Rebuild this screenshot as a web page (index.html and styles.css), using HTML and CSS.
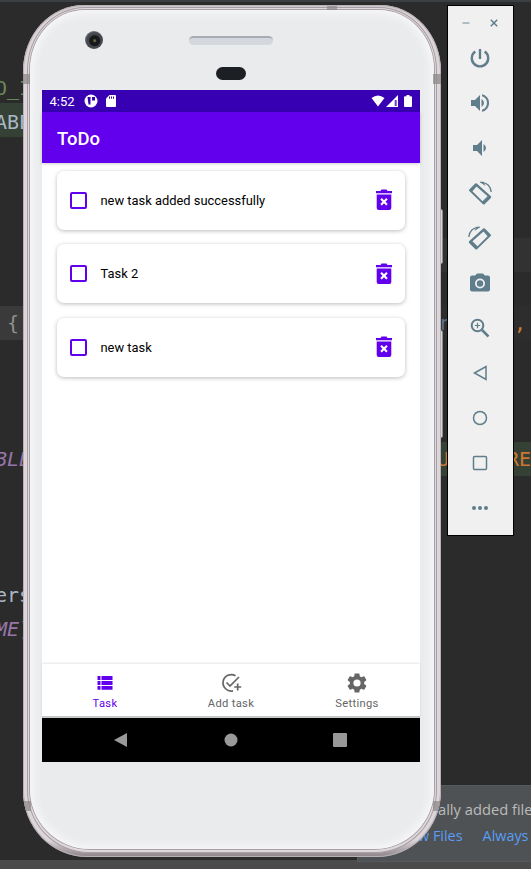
FILE: index.html
```html
<!DOCTYPE html>
<html lang="en">
<head>
<meta charset="utf-8">
<title>ToDo</title>
<link rel="stylesheet" href="styles.css">
</head>
<body>
<svg width="0" height="0" class="defs">
  <symbol id="trash" viewBox="0 0 24 24"><path fill-rule="evenodd" d="M4 5.200V3h4.500l1-1.500h5L15.500 3H20v2.200zM4.700 6.500h14.600V20q0 2-2 2H6.700q-2 0-2-2zM8.300 11.500l2.200 2.300-2.200 2.300 1.500 1.500 2.200-2.300 2.200 2.300 1.500-1.500-2.200-2.300 2.200-2.300-1.500-1.500-2.200 2.300-2.200-2.300z"/></symbol>
  <symbol id="rotate" viewBox="0 0 24 24"><path fill-rule="evenodd" d="M1.300 8.500L7.200 2.600q.8-.7 1.600 0L22.900 15.300q.8.800 0 1.600l-6.300 6.300q-.8.700-1.600 0L1.300 10.100q-.7-.8 0-1.600zM4.400 10.200L14.500 20.300l5.100-5.100L8.500 5.600z"/><path class="o" d="M12.500 1.300q9.500 0 10.700 9.700" stroke-width="1.300"/><path d="M11.500.7h4l2 4.300z"/></symbol>
</svg>
<div class="desktop">
  <div class="editor">
    <div class="line"></div>
    <div class="line"></div>
    <div class="line string"><span class="code-a">O_I</span></div>
    <div class="line match-left"><span class="code-a">ABE</span></div>
    <div class="line short"></div>
    <div class="line"></div>
    <div class="line"></div>
    <div class="line caret"></div>
    <div class="line"></div>
    <div class="line folded"><span class="code-b">{</span><span class="code-n">n</span><span class="comma">,</span></div>
    <div class="line"></div>
    <div class="line"></div>
    <div class="line"></div>
    <div class="line match-right"><span class="code-a field">BLE</span><span class="code-u">U</span><span class="code-re">RE</span></div>
    <div class="line"></div>
    <div class="line"></div>
    <div class="line"></div>
    <div class="line"><span class="code-c">ers</span></div>
    <div class="line"><span class="code-a field">ME</span><span>)</span></div>
  </div>
  <div class="footer-strip"></div>
  <div class="balloon">
    <p>ally added files</p>
    <p class="links"><span>w Files</span><span>Always</span></p>
  </div>

  <div class="side-button power"></div>
  <div class="side-button volume"></div>
  <div class="phone">
    <i class="band top-band"></i><i class="band left-band"></i><i class="band right-band"></i><i class="band low-left"></i><i class="band low-right"></i>
    <div class="rim"><div class="face">
      <div class="sensors">
        <i class="camera"></i><i class="speaker"></i><i class="sensor"></i>
      </div>
      <div class="screen">
        <div class="status">
          <span class="clock">4:52</span>
          <svg class="app-dot" viewBox="0 0 14 14"><circle cx="7" cy="7" r="6.500" fill="#fff"/><path d="M3.500 3h3v7.500h-2M8 3h3v3.500H8z" fill="#3700b3"/></svg>
          <svg class="sd" viewBox="0 0 10 12"><path d="M3.500 0H9q1 0 1 1v10q0 1-1 1H1q-1 0-1-1V3.500z" fill="#fff"/><path d="M3.500 1.500v2.200M5.500 1.500v2.200M7.500 1.500v2.200" stroke="#3700b3"/></svg>
          <svg class="signals" viewBox="0 0 42 12"><path d="M.5 3Q7-2 13.500 3L7 11.500zM27 0v12H15z" fill="#fff"/><path d="M23.700 5h2v6h-2z" fill="#6740c7"/><path d="M33 2.200q0-1 1-1h1.500V0h3v1.200H40q1 0 1 1V11q0 1-1 1h-6q-1 0-1-1z" fill="#fff"/></svg>
        </div>
        <div class="appbar">ToDo</div>
        <div class="tasks">
          <div class="card"><i class="check"></i><span>new task added successfully</span><svg><use href="#trash"/></svg></div>
          <div class="card"><i class="check"></i><span>Task 2</span><svg><use href="#trash"/></svg></div>
          <div class="card"><i class="check"></i><span>new task</span><svg><use href="#trash"/></svg></div>
        </div>
        <div class="tabs">
          <div class="tab active"><svg viewBox="0 0 20 20"><path d="M2.500 3h3v4h-3zM6.500 3h11v4h-11zM2.500 8h3v4h-3zM6.500 8h11v4h-11zM2.500 13h3v3.800h-3zM6.500 13h11v3.800h-11z"/></svg><span>Task</span></div>
          <div class="tab"><svg viewBox="0 0 20 20" class="add"><path d="M14.500 2.800A8.200 8.200 0 1 0 12 17.800M5.500 9.500l3.500 3.500L18 4M16.700 10.500v7M13.200 14h7" fill="none" stroke="currentColor" stroke-width="1.700"/></svg><span>Add task</span></div>
          <div class="tab"><svg viewBox="2 2 20 20"><path d="M19.140 12.940c.04-.3.060-.61.060-.94 0-.32-.02-.64-.07-.94l2.030-1.580c.18-.14.230-.41.120-.61l-1.920-3.320c-.12-.22-.37-.29-.59-.22l-2.390.96c-.5-.38-1.030-.7-1.620-.94l-.36-2.540c-.04-.24-.24-.41-.48-.41h-3.840c-.24 0-.43.170-.47.410l-.36 2.540c-.59.240-1.130.570-1.620.940l-2.390-.96c-.22-.08-.47 0-.59.220L2.740 8.870c-.12.210-.08.470.120.610l2.030 1.580c-.05.300-.09.630-.09.940s.02.640.070.940l-2.030 1.580c-.18.140-.23.410-.12.610l1.920 3.320c.12.220.370.290.590.220l2.390-.96c.5.380 1.030.700 1.620.940l.36 2.540c.05.240.240.410.480.410h3.840c.24 0 .44-.17.470-.41l.36-2.540c.59-.24 1.130-.56 1.620-.94l2.390.96c.22.080.470 0 .59-.22l1.920-3.320c.12-.22.070-.47-.12-.61zM12 15.600A3.600 3.600 0 1 1 12 8.400a3.600 3.600 0 0 1 0 7.200z"/></svg><span>Settings</span></div>
        </div>
        <div class="sysnav">
          <svg viewBox="0 0 378 44"><path d="M72 22l13-7v14z"/><circle cx="189" cy="22" r="6.500"/><rect x="291" y="15" width="14" height="14" rx="1"/></svg>
        </div>
      </div>
    </div></div>
  </div>

  <div class="toolbar">
    <div class="winbar">
      <svg viewBox="0 0 8 8"><path d="M.5 4h7" stroke="#9aabb2" stroke-width="1.500"/></svg>
      <svg viewBox="0 0 8 8"><path d="M.8.8l6.400 6.400M7.200.8L.8 7.200" stroke="#607d8b" stroke-width="1.500"/></svg>
    </div>
    <svg class="tool" viewBox="0 0 24 24"><path class="o" d="M12 3v10M7.300 5.500a8.200 8.200 0 1 0 9.400 0" stroke-width="2.400"/></svg>
    <svg class="tool" viewBox="0 0 24 24"><path d="M3 9v6h4l5 5V4L7 9zM13.500 8v8q2.500-1.300 2.500-4t-2.500-4zM14 3.200v2.100a7 7 0 0 1 0 13.400v2.100a9 9 0 0 0 0-17.600z"/></svg>
    <svg class="tool" viewBox="0 0 24 24"><path d="M5 9v6h4l5 5V4L9 9zM15.500 8v8q2.500-1.300 2.500-4t-2.500-4z"/></svg>
    <svg class="tool"><use href="#rotate"/></svg>
    <svg class="tool flip"><use href="#rotate"/></svg>
    <svg class="tool" viewBox="0 0 24 24"><path fill-rule="evenodd" d="M9 2.500L7.200 4.500H4q-2 0-2 2v12q0 2 2 2h16q2 0 2-2v-12q0-2-2-2h-3.200L15 2.500zM12 7.500a5 5 0 1 1 0 10 5 5 0 0 1 0-10z"/><circle cx="12" cy="12.500" r="3.200"/></svg>
    <svg class="tool" viewBox="0 0 24 24"><path class="o" d="M14 14l6.500 6.500" stroke-width="2.500"/><circle class="o" cx="9.500" cy="9.500" r="5.800" stroke-width="2"/><path class="o" d="M9.500 6.800v5.400M6.800 9.500h5.400" stroke-width="1.200"/></svg>
    <svg class="tool" viewBox="0 0 24 24"><path class="o" d="M6.500 12L18 5.500v13z" stroke-width="1.500"/></svg>
    <svg class="tool" viewBox="0 0 24 24"><circle class="o" cx="12" cy="12" r="6.500" stroke-width="1.500"/></svg>
    <svg class="tool" viewBox="0 0 24 24"><rect class="o" x="5.500" y="5.500" width="13" height="13" rx="1" stroke-width="1.500"/></svg>
    <svg class="tool" viewBox="0 0 24 24"><circle cx="6" cy="12" r="2"/><circle cx="12" cy="12" r="2"/><circle cx="18" cy="12" r="2"/></svg>
  </div>
</div>
</body>
</html>
```
FILE: styles.css
```css
* { box-sizing: border-box; }
body { margin: 0; }
.defs { position: absolute; }
i { display: block; }
svg { display: block; flex: none; }

.desktop {
  position: relative;
  width: 531px;
  height: 869px;
  overflow: hidden;
  background: #2b2b2b;
}

/* Code editor behind the emulator */
.editor {
  border-top: 2px solid #3c3f41;
  font: 20px/34px "DejaVu Sans Mono", monospace;
  color: #a9b7c6;
}
.line { display: flex; height: 34px; white-space: pre; }
.line:first-child, .line.short { height: 33px; }
.code-a { width: 32px; margin-left: -5px; flex: none; }
.string { color: #6a8759; line-height: 38px; }
.match-left { background: linear-gradient(90deg, #344134 400px, #2b2b2b 400px); line-height: 38px; }
.caret { background: linear-gradient(90deg, #2b2b2b 400px, #323232 400px); }
.folded { background: linear-gradient(90deg, #3a3a3a 440px, #2d2d2d 440px); color: #8e9290; }
.code-b { width: 433px; margin-left: 7px; }
.code-n { width: 74px; color: #5f7286; }
.comma { color: #cc7832; }
.match-right { background: linear-gradient(90deg, #2b2b2b 440px, #344134 440px); color: #cc7832; }
.field { color: #9876aa; font-style: italic; }
.code-u { margin-left: 410px; width: 74px; }
.line .code-a.field + span:not(.code-u) { margin-left: -8px; }
.code-c { margin-left: -5px; }

.footer-strip { position: absolute; left: 0; right: 0; bottom: 0; height: 9px; background: #4b4b4b; }
.balloon {
  position: absolute;
  left: 357px;
  top: 785px;
  width: 190px;
  height: 77px;
  padding: 12px 0 0 80px;
  border: 1px solid #565a5c;
  background: #4e5254;
  font: 14.700px/22px "Open Sans", sans-serif;
  color: #bbb;
  white-space: nowrap;
}
.balloon p { margin: 0; }
.balloon .links { display: flex; gap: 20px; margin: 5px 0 0 -20px; color: #589df6; font-size: 14.400px; }

/* Handset */
.side-button { position: absolute; left: 438px; width: 5px; border: 1px solid #8d8d8d; border-radius: 2px; background: #d6d6d4; }
.power { top: 209px; height: 55px; }
.volume { top: 330px; height: 108px; }
.phone {
  position: absolute;
  left: 23px;
  top: 5px;
  width: 418px;
  height: 852px;
  padding: 2px 4px 4px;
  overflow: hidden;
  border-radius: 61px 61px 64px 64px / 66px;
  background: linear-gradient(180deg, #cfc8cc, #dcd5d9 10px, #dcd5d9 835px, #8b8287);
  box-shadow: inset 0 0 0 1px #b7b0b4;
}
.rim {
  height: 100%;
  padding: 2px 2px 3px;
  border: 1px solid #a69ea2;
  border-radius: 58px 58px 62px 62px / 63px;
  background: #ded7db;
}
.face {
  height: 100%;
  padding: 0 0 0 12px;
  border-radius: 55px 55px 60px 60px / 60px;
  background: #eaebed;
  box-shadow: 0 0 0 1px #a79fa3, inset 0 0 8px 3px #f8f8fa;
}
.band { position: absolute; width: 8px; height: 10px; background: #8f888b; opacity: .75; z-index: 1; }
.top-band { left: 304px; top: 1px; width: 10px; height: 4px; }
.left-band { left: 0; top: 69px; width: 7px; }
.right-band { right: 0; top: 69px; }
.low-left { left: 0; top: 796px; }
.low-right { right: 0; top: 796px; }

.sensors { display: grid; grid-template-columns: 42px 147px 1fr; grid-template-rows: 35px 1fr; height: 80px; }
.camera {
  margin: 21px 0 0 43px;
  width: 18px;
  height: 18px;
  border-radius: 50%;
  background: radial-gradient(circle at 54% 54%, #66643a 0 1px, #17191c 2px 5px, #44474c 6px 8px, #63666a 9px);
}
.speaker {
  margin: 26px 0 0 105px;
  width: 84px;
  height: 9px;
  border-radius: 5px;
  border-top: 2px solid #a9acb5;
  background: #d4d7de;
}
.sensor { grid-column: 1 / -1; margin: 22px 0 0 174px; width: 30px; height: 13px; border-radius: 7px; background: #1c1f23; }

.screen { display: flex; flex-direction: column; width: 378px; height: 672px; background: #fff; font-family: Roboto, sans-serif; }
.status { display: flex; align-items: center; height: 22px; padding: 0 7px 0 7.500px; background: #3700b3; color: #fff; }
.clock { width: 34.500px; font-size: 13px; }
.app-dot { width: 14px; height: 14px; }
.sd { width: 10px; height: 12px; margin-left: 8px; }
.signals { width: 42px; height: 12px; margin-left: auto; }
.appbar {
  height: 51px;
  padding-left: 15px;
  background: #6200ee;
  color: #fff;
  font-size: 18.500px;
  font-weight: 500;
  line-height: 54px;
  box-shadow: 0 1px 3px #0003;
}
.tasks { display: flex; flex: 1; flex-direction: column; gap: 14.500px; padding: 7.500px 15px; }
.card {
  display: flex;
  align-items: center;
  height: 59px;
  padding: 0 12px 0 13px;
  border-radius: 7px;
  background: #fff;
  box-shadow: 0 1px 4px #0004;
  font-size: 12.900px;
  color: #000;
}
.check { width: 17px; height: 17px; margin-right: 13.500px; border: 2px solid #6200ee; border-radius: 2px; }
.card svg { width: 24px; height: 24px; margin: 0 -3px 0 auto; fill: #6200ee; }
.tabs { display: flex; height: 54px; border-bottom: 2px solid #c4c8c9; box-shadow: 0 -1px 2px #0000001a; }
.tab { display: flex; flex: 1; flex-direction: column; align-items: center; padding-top: 9px; color: #666; font-size: 11.200px; line-height: 15px; letter-spacing: .32px; }
.tab svg { width: 20px; height: 20px; margin-bottom: 3px; fill: currentColor; overflow: visible; }
.tab.active { color: #6200ee; }
.sysnav { height: 44px; background: #000; fill: #999; }

/* Emulator controls */
.toolbar {
  position: absolute;
  left: 447px;
  top: 5px;
  width: 67px;
  height: 531px;
  display: flex;
  flex-direction: column;
  align-items: center;
  border: 1px solid #000;
  background: #f0f0f0;
}
.winbar { display: flex; flex: none; gap: 20px; padding-top: 13px; height: 40px; margin-left: -1px; }
.winbar svg { width: 8px; height: 8px; }
.tool { width: 24px; height: 24px; margin: 0 1px 21px 0; fill: #607d8b; overflow: visible; }
.tool:last-child { margin-bottom: 0; }
.o { fill: none; stroke: #607d8b; }
.flip { transform: scaleX(-1); }
```
